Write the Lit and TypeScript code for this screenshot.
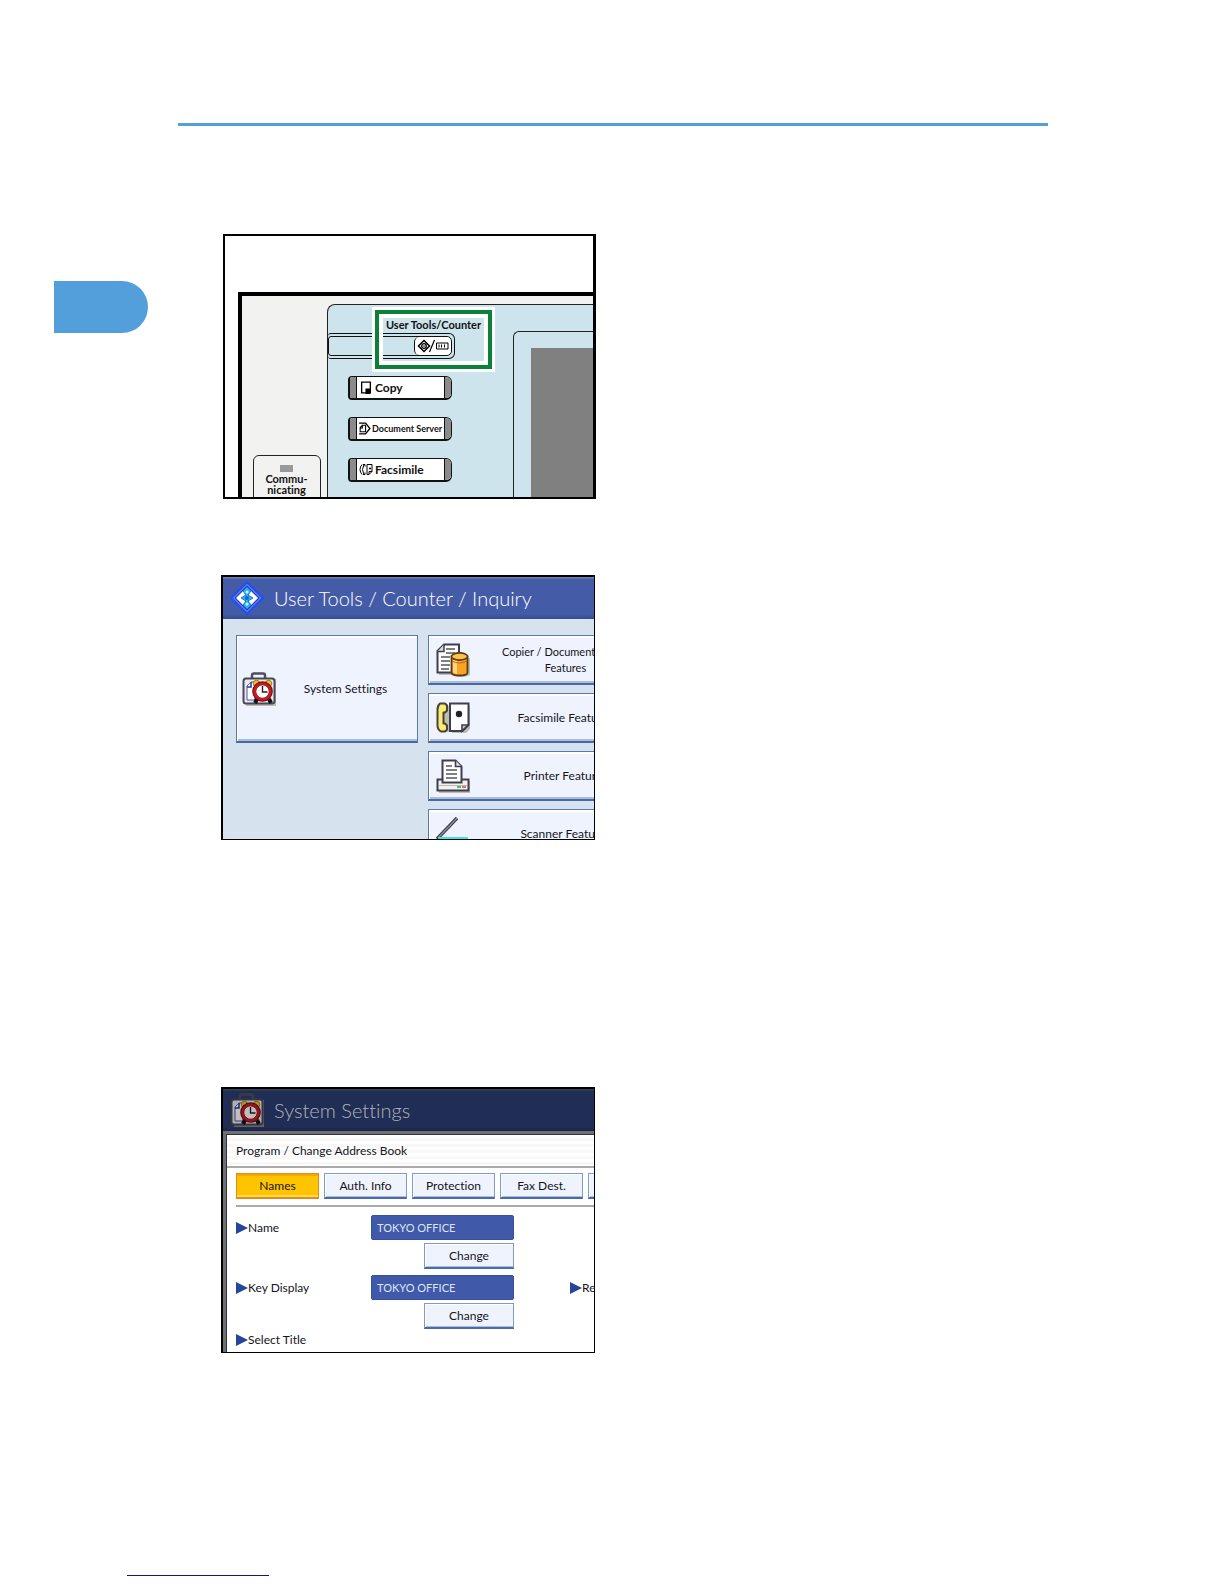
import { LitElement, html, css, nothing } from "lit";
import { customElement, state } from "lit/decorators.js";

const caseIcon = html`<svg class="icon" viewBox="0 0 34 34" aria-hidden="true">
  <path d="M5 7h29v27H4z" fill="#aaa78c" opacity=".7" />
  <path d="M10 6V3.500Q10 1.500 12 1.500h9Q23 1.500 23 3.500V6" fill="none" stroke="#4c4e62" stroke-width="2.500" />
  <rect x="1.500" y="6.500" width="31" height="25" rx="2.500" fill="#e9e9ec" stroke="#4a4758" stroke-width="2" />
  <path d="M5 28V14l4-4h4v18z" fill="#fff" stroke="#4a50b0" />
  <path d="M5 15h4v-5" fill="#fff" stroke="#2a309b" stroke-width="1.500" />
  <path d="M13 31l2-4M29 31l-2-4" stroke="#171018" stroke-width="4" />
  <circle cx="14.500" cy="11.500" r="3.200" fill="#f6c51c" stroke="#9b7519" />
  <circle cx="26.500" cy="11.500" r="3.200" fill="#f6c51c" stroke="#9b7519" />
  <circle cx="20.500" cy="19.500" r="8.300" fill="#fff" stroke="#5b1016" stroke-width="4" />
  <circle cx="20.500" cy="19.500" r="8" fill="none" stroke="#d3161d" stroke-width="2.600" />
  <path d="M20.500 14v6h5" fill="none" stroke="#222" stroke-width="1.400" />
</svg>`;

const diamondIcon = html`<svg class="icon" viewBox="0 0 34 34" aria-hidden="true">
  <path d="M17 1.500L32.500 17 17 32.500 1.500 17z" fill="#1d36c8" stroke="#2450ee" stroke-width="3" stroke-linejoin="round" />
  <path d="M17 3.500L30.500 17 17 30.500 3.500 17z" fill="#2342c5" stroke="#8ba0ee" />
  <path d="M15 8v18l-9-9zM19 8v18l9-9z" fill="#fff" />
  <path d="M17 6l4 4-3 4 5 3-5 3 3 4-4 4-4-4 3-4-5-3 5-3-3-4z" fill="#24b7ee" stroke="#1a7ad6" />
  <circle cx="17" cy="11" r="1.500" fill="#d7f4ff" /><circle cx="17" cy="23" r="1.500" fill="#d7f4ff" />
  <circle cx="17" cy="17" r="2" fill="#1a62d2" />
</svg>`;

const copierIcon = html`<svg class="icon" viewBox="0 0 34 34" aria-hidden="true">
  <path d="M3 8h20v24H3z" fill="#aaa78c" opacity=".7" />
  <path d="M1.500 29.500V8L8 1.500h15v28z" fill="#fff" stroke="#403d50" stroke-width="2" />
  <path d="M1.500 8.500H8v-7" fill="#dcdce6" stroke="#403d50" stroke-width="1.500" />
  <path d="M10 6h9M10 10h9M5 14h9M5 18h9M5 22h9M5 26h8" stroke="#55555f" stroke-width="1.400" />
  <path d="M17 15v17q8 4 17 0V15z" fill="#aaa78c" opacity=".7" />
  <path d="M15.500 13.500v16q0 3 8 3t8-3v-16z" fill="#f7a326" stroke="#5b3a12" stroke-width="1.800" />
  <path d="M17 17v12q2 2 4 2V18z" fill="#ffd684" />
  <ellipse cx="23.500" cy="13.500" rx="8" ry="3.600" fill="#ffc04d" stroke="#5b3a12" stroke-width="1.600" />
  <path d="M16 18q7 4 15 0" fill="none" stroke="#b06f14" />
</svg>`;

const faxIcon = html`<svg class="icon" viewBox="0 0 34 34" aria-hidden="true">
  <path d="M3 5h10v26H3zM16 5h18v23l-4 4H16z" fill="#aaa78c" opacity=".7" />
  <path d="M4 2.500h5l2 2v5l-2 2H7.500v11H9l2 2v4l-2 2H5q-3.500-2-3.500-6v-16q0-4 2.500-6z" fill="#f8ec74" stroke="#4b4234" stroke-width="2" stroke-linejoin="round" />
  <path d="M14 2.500h18.500V24l-6 6H14z" fill="#fff" stroke="#403d50" stroke-width="2" />
  <path d="M26 30v-6h6z" fill="#d4d4df" stroke="#403d50" stroke-width="1.600" />
  <circle cx="23" cy="13" r="3.200" fill="#24212c" />
</svg>`;

const printerIcon = html`<svg class="icon" viewBox="0 0 34 34" aria-hidden="true">
  <path d="M3 22h31v12H3z" fill="#aaa78c" opacity=".7" />
  <path d="M1.500 20.500h31v11h-31z" fill="#f2f2ee" stroke="#403d50" stroke-width="2" />
  <path d="M6.500 23.500v-22h13l6 6v16z" fill="#fff" stroke="#403d50" stroke-width="2" />
  <path d="M19.500 1.500v6h6" fill="#dcdce6" stroke="#403d50" stroke-width="1.600" />
  <path d="M10 7h6M10 11h11M10 15h11M10 19h11" stroke="#55555f" stroke-width="1.400" />
  <path d="M3 26.500h28" stroke="#b9b9b5" />
  <path d="M21 28h4" stroke="#27a844" stroke-width="1.500" /><path d="M26 28h4" stroke="#d5406a" stroke-width="1.500" />
</svg>`;

const scannerIcon = html`<svg class="icon" viewBox="0 0 34 34" aria-hidden="true">
  <path d="M1 22L21 1" stroke="#3b3a44" stroke-width="3.500" />
  <path d="M2 21L21 1" stroke="#8b8d98" stroke-width="1.400" />
  <path d="M3 20h29v3H1z" fill="#3ce4ea" />
  <path d="M1 23.500h32v9H1z" fill="#eee" stroke="#403d50" stroke-width="2" />
</svg>`;

const triangle = html`<svg class="tri" viewBox="0 0 12 12" aria-hidden="true"><path d="M0 0L12 6 0 12z" fill="#24479a" /></svg>`;

const pageGlyph = html`<svg class="glyph" viewBox="0 0 12 12" aria-hidden="true"><path d="M2 1h8v10H2z" fill="#fff" stroke="#000" stroke-width="1.200" /><path d="M5.500 7H10v5H5.500z" fill="#000" /></svg>`;
const serverGlyph = html`<svg class="glyph" viewBox="0 0 12 12" aria-hidden="true"><path d="M1 1h6l4 5-4 5H1" fill="none" stroke="#000" stroke-width="1.200" /><path d="M2 9V5l2-2h3v6zM2 5.500h2V3" fill="none" stroke="#000" /></svg>`;
const faxGlyph = html`<svg class="glyph" viewBox="0 0 14 12" aria-hidden="true"><path d="M3 1Q-1 6 3 11M5 1q-3 5 0 10M4 1h2v2M4 11h2V9" fill="none" stroke="#000" /><path d="M8 1h5v7l-3 3H8zM10 11V8h3" fill="#fff" stroke="#000" /><circle cx="11" cy="5" r="1" /></svg>`;

@customElement("operation-panel")
export class OperationPanel extends LitElement {
  static styles = css`
    :host { display: block; font-family: Lato, "Liberation Sans", sans-serif; font-variant-ligatures: none; color: #111; }
    button { font: inherit; color: inherit; padding: 0; margin: 0; cursor: pointer; }
    .panel { box-sizing: border-box; height: 265px; border: 2px solid #000; border-right-width: 3px; overflow: hidden; background: #fff; padding: 56px 0 0 13px; }
    .console { display: flex; border: solid #000; border-width: 4px 0 0 4px; background: #f2f3f0; height: 210px; }
    .side { flex: 0 0 85px; display: flex; flex-direction: column; justify-content: flex-end; align-items: center; box-sizing: border-box; padding-left: 4px; }
    .comm { box-sizing: border-box; width: 68px; height: 51px; border: 1px solid #222; border-radius: 6px; display: flex; flex-direction: column; align-items: center; padding-top: 9px; font-size: 11px; line-height: 11px; font-weight: 700; text-align: center; }
    .lamp { flex: none; width: 13px; height: 7px; margin-bottom: 1px; background: #999; }
    .face { flex: 1; display: flex; margin-top: 8px; border: solid #222; border-width: 1px 0 0 1px; border-radius: 8px 0 0 0; background: #cde4ec; }
    .keys { position: relative; flex: 0 0 185px; display: flex; flex-direction: column; gap: 17px; }
    .slot { box-sizing: border-box; width: 127px; height: 26px; margin-top: 28px; border: 1px solid #111; border-left: 0; border-radius: 3px 6px 6px 3px; padding: 2px 2px 2px 0; }
    .rail { box-sizing: border-box; height: 20px; border: 1px solid #111; border-radius: 3px 5px 5px 3px; display: flex; justify-content: flex-end; }
    .tools { box-sizing: border-box; width: 37px; height: 18px; border: 0; border-left: 1px solid #111; border-radius: 5px; background: #fff; display: flex; align-items: center; justify-content: center; }
    .tools svg { width: 32px; height: 14px; }
    .mark { position: absolute; left: 47px; top: 5px; box-sizing: border-box; width: 117px; height: 59px; border: 4px solid #0b8038; box-shadow: 0 0 0 3px #fff, inset 0 0 0 4px #fff; text-align: center; padding-top: 4px; font-size: 11px; line-height: 14px; font-weight: 700; pointer-events: none; white-space: nowrap; }
    .key { box-sizing: border-box; width: 104px; height: 24px; margin-left: 20px; border: 2px solid #111; border-width: 1px 1px 2px 2px; border-radius: 4px 6px 6px 4px; background: #fff; display: flex; align-items: center; gap: 2px; overflow: hidden; font-weight: 700; font-size: 12px; white-space: nowrap; }
    .key.small { gap: 1px; font-size: 9px; }
    .end { flex: 0 0 6px; align-self: stretch; background: #8b8b8b; border-right: 1px solid #111; }
    .end.right { margin-left: auto; border-right: 0; border-left: 1px solid #111; }
    .key .glyph { flex: 0 0 14px; height: 13px; }
    .key.small .glyph { flex-basis: 13px; }
    .bezel { flex: 1; margin-top: 26px; border: solid #222; border-width: 1px 0 0 1px; border-radius: 6px 0 0 0; padding: 16px 0 0 17px; display: flex; }
    .display { flex: 1; background: #808080; }
  `;

  private keys = [
    { label: "Copy", glyph: pageGlyph, small: false },
    { label: "Document Server", glyph: serverGlyph, small: true },
    { label: "Facsimile", glyph: faxGlyph, small: false },
  ];

  render() {
    return html`<div class="panel"><div class="console">
      <div class="side"><div class="comm"><span class="lamp"></span><span>Commu-<br />nicating</span></div></div>
      <div class="face">
        <div class="keys">
          <div class="slot"><div class="rail"><button class="tools" aria-labelledby="tools-label">
            <svg viewBox="0 0 32 14" aria-hidden="true">
              <path d="M7 1.500l5.500 5.500L7 12.500 1.500 7z" fill="#fff" stroke="#000" stroke-width="1.500" />
              <circle cx="7" cy="7" r="2.300" fill="none" stroke="#000" stroke-width="1.300" /><circle cx="7" cy="7" r=".8" />
              <path d="M12.500 13l5-12" stroke="#000" stroke-width="1.200" />
              <path d="M19.500 4h11.500v6H19.500z" fill="none" stroke="#000" />
              <path d="M22 5.500v3M24.500 5.500v3M27.500 5.500v3" stroke="#000" />
            </svg></button></div></div>
          ${this.keys.map((k) => html`<button class="key ${k.small ? "small" : ""}"><span class="end"></span>${k.glyph}<span>${k.label}</span><span class="end right"></span></button>`)}
          <div class="mark" id="tools-label">User Tools/Counter</div>
        </div>
        <div class="bezel"><div class="display"></div></div>
      </div>
    </div></div>`;
  }
}

@customElement("tools-menu")
export class ToolsMenu extends LitElement {
  static styles = css`
    :host { display: block; font-family: Lato, "Liberation Sans", sans-serif; font-variant-ligatures: none; color: #15151c; }
    .screen { box-sizing: border-box; height: 265px; border: 2px solid #000; border-width: 2px 1px 1px 2px; overflow: hidden; background: #d6e3ee; }
    .bar { display: flex; align-items: center; gap: 10px; height: 42px; box-sizing: border-box; padding-left: 7px; color: #fff; background: linear-gradient(#6b7fa9 0 1px, #445ca8 2px 37px, #374b8a); }
    .title { margin: 0; font-size: 20px; line-height: 28px; font-weight: 300; white-space: nowrap; }
    .icon { flex: 0 0 34px; width: 34px; height: 34px; }
    .body { display: flex; gap: 10px; padding: 16px 0 0 13px; align-items: flex-start; }
    .list { flex: none; display: flex; flex-direction: column; gap: 8px; }
    .card { flex: none; box-sizing: border-box; display: flex; align-items: center; width: 236px; height: 50px; border: 1px solid #5b76b0; border-bottom: 2px solid #4b67a8; box-shadow: inset 1px 2px 0 #fff, inset 0 -2px 0 #a9bfd9; background: #eff3fe; padding: 0 2px 0 7px; font: inherit; font-size: 12px; line-height: 16px; color: inherit; cursor: pointer; }
    .card.large { width: 182px; height: 108px; padding-left: 5px; }
    .card.dense { font-size: 11px; }
    .text { flex: 1; text-align: center; white-space: nowrap; }
  `;

  private items = [
    { icon: copierIcon, lines: ["Copier / Document Server", "Features"] },
    { icon: faxIcon, lines: ["Facsimile Features"] },
    { icon: printerIcon, lines: ["Printer Features"] },
    { icon: scannerIcon, lines: ["Scanner Features"] },
  ];

  render() {
    return html`<section class="screen">
      <header class="bar">${diamondIcon}<h2 class="title">User Tools / Counter / Inquiry</h2></header>
      <div class="body">
        <button class="card large">${caseIcon}<span class="text">System Settings</span></button>
        <div class="list">
          ${this.items.map((i) => html`<button class="card ${i.lines[1] ? "dense" : ""}">${i.icon}<span class="text">${i.lines[0]}${i.lines[1] ? html`<br />${i.lines[1]}` : nothing}</span></button>`)}
        </div>
      </div>
    </section>`;
  }
}

@customElement("address-book")
export class AddressBook extends LitElement {
  static styles = css`
    :host { display: block; font-family: Lato, "Liberation Sans", sans-serif; font-variant-ligatures: none; color: #15151c; font-size: 12px; line-height: 16px; }
    .screen { box-sizing: border-box; height: 266px; border: 2px solid #000; border-width: 2px 1px 1px 2px; overflow: hidden; background: #6d7176; }
    .bar { display: flex; align-items: center; gap: 10px; height: 42px; box-sizing: border-box; padding-left: 7px; color: #b2b4b8; background: linear-gradient(#3a3f4c 0 1px, #202d55 2px 38px, #1a2548); }
    .bar .icon { flex: 0 0 34px; width: 34px; height: 34px; filter: brightness(.75); }
    .title { margin: 0; font-size: 20px; line-height: 28px; font-weight: 300; }
    .dialog { margin: 3px 0 0 3px; border: solid #333; border-width: 1px 0 0 1px; background: #fff; height: 222px; }
    .caption { margin: 0; height: 31px; line-height: 31px; padding-left: 9px; font-size: 12px; font-weight: 400; border-bottom: 2px solid #aaa; background: repeating-linear-gradient(#fff 0 3px, #f8f8f8 3px 6px); }
    .form { padding: 5px 0 0 9px; }
    .tabs { display: flex; gap: 5px; padding-bottom: 6px; border-bottom: 2px solid #aaa; }
    button { box-sizing: border-box; height: 26px; padding: 0; border: 1px solid #7f9cc8; border-bottom: 2px solid #4a69ae; box-shadow: inset 1px 1px 0 #fff, inset 0 -1px 0 #a9bfdf; background: #eff3fe; font: inherit; color: inherit; cursor: pointer; }
    .tab { flex: 0 0 83px; }
    .tab.on { background: #ffc400; border-color: #e58a1c; box-shadow: inset 0 2px 0 #f5a800, inset 0 -2px 0 #ffdc50; }
    .fields { display: grid; grid-template-columns: 135px 143px 56px auto; align-items: center; padding-top: 8px; row-gap: 3px; }
    .name { grid-column: 1; display: flex; align-items: center; white-space: nowrap; height: 16px; }
    .tri { width: 12px; height: 12px; flex: none; }
    input { box-sizing: border-box; width: 143px; height: 25px; border: 1px solid #38519a; border-radius: 2px; background: #4059a8; color: #dfe5f5; font: 11px/16px Lato, "Liberation Sans", sans-serif; padding: 0 5px; }
    .change { grid-column: 2; justify-self: end; width: 90px; margin-bottom: 3px; }
    .right { grid-column: 4; }
  `;

  @state() private active = "Names";

  render() {
    return html`<section class="screen">
      <header class="bar">${caseIcon}<h2 class="title">System Settings</h2></header>
      <div class="dialog">
        <h3 class="caption">Program / Change Address Book</h3>
        <div class="form">
          <div class="tabs">
            ${["Names", "Auth. Info", "Protection", "Fax Dest."].map((t) => html`<button class="tab ${t === this.active ? "on" : ""}" @click=${() => (this.active = t)}>${t}</button>`)}
            <button class="tab" aria-label="More"></button>
          </div>
          <div class="fields">
            <label class="name" for="name">${triangle}Name</label>
            <input id="name" readonly value="TOKYO OFFICE" />
            <button class="change">Change</button>
            <label class="name" for="key">${triangle}Key Display</label>
            <input id="key" readonly value="TOKYO OFFICE" />
            <span class="name right">${triangle}Registration No.</span>
            <button class="change">Change</button>
          </div>
          <div class="name">${triangle}Select Title</div>
        </div>
      </div>
    </section>`;
  }
}

@customElement("app-root")
export class AppRoot extends LitElement {
  static styles = css`
    :host { display: block; background: #fff; }
    .page { box-sizing: border-box; min-height: 100vh; display: flex; flex-direction: column; padding: 123px 0 8px; }
    .rule { margin: 0 176px 0 178px; border: 0; border-top: 3px solid #539fdb; }
    .row { display: flex; padding-left: 54px; }
    .marker { flex: 0 0 94px; height: 52px; margin: 155px 73px 0 0; border-radius: 0 26px 26px 0; background: #539fdb; }
    .figures { flex: 0 1 375px; display: flex; flex-direction: column; padding-top: 108px; }
    .figure { width: 374px; max-width: 100%; }
    .first { width: 373px; align-self: flex-end; }
    .next { margin-top: 76px; }
    .later { margin-top: 247px; }
    .foot { width: 142px; margin: auto 0 0 127px; border: 0; border-top: 1px solid #14148c; }
  `;

  render() {
    return html`<main class="page">
      <hr class="rule" />
      <div class="row">
        <aside class="marker"></aside>
        <div class="figures">
          <operation-panel class="figure first"></operation-panel>
          <tools-menu class="figure next"></tools-menu>
          <address-book class="figure later"></address-book>
        </div>
      </div>
      <hr class="foot" />
    </main>`;
  }
}
